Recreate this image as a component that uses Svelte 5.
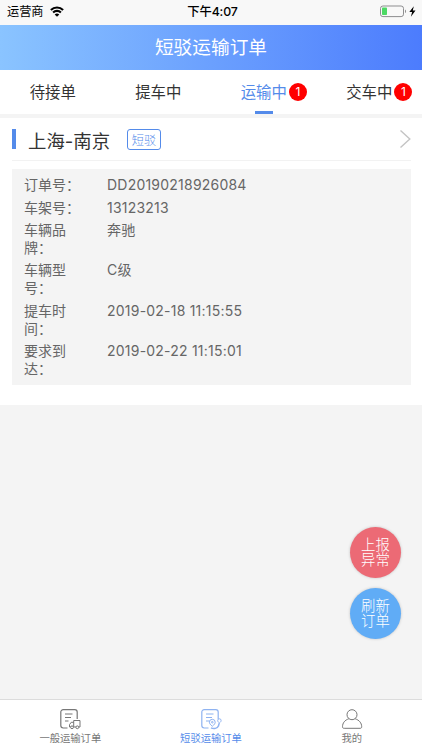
<script>
  let active = $state(2);
  let page = $state(1);

  const tabs = [
    { label: "待接单", count: 0 },
    { label: "提车中", count: 0 },
    { label: "运输中", count: 1 },
    { label: "交车中", count: 1 },
  ];

  const order = {
    route: "上海-南京",
    type: "短驳",
    fields: [
      ["订单号：", "DD20190218926084"],
      ["车架号：", "13123213"],
      ["车辆品牌：", "奔驰"],
      ["车辆型号：", "C级"],
      ["提车时间：", "2019-02-18 11:15:55"],
      ["要求到达：", "2019-02-22 11:15:01"],
    ],
  };

  const pages = ["一般运输订单", "短驳运输订单", "我的"];
</script>

<div class="app">
  <div class="status">
    <div class="carrier">
      <span>运营商</span>
      <svg width="14" height="11" viewBox="0 0 14 11">
        <path d="M.9 4a8.7 8.700 0 0 1 12.200 0M3.100 6.500a5.600 5.600 0 0 1 7.800 0" fill="none" stroke="#000" stroke-width="2.100" />
        <path d="M7 10.800 4.700 8.500a3.300 3.300 0 0 1 4.600 0z" />
      </svg>
    </div>
    <div class="time">下午4:07</div>
    <div class="battery">
      <svg width="38" height="13" viewBox="0 0 38 13">
        <rect x=".5" y="1" width="23" height="10.6" rx="2.4" fill="none" stroke="#8d8d8f" />
        <rect x="2" y="2.5" width="5" height="7.6" rx=".8" fill="#4cd964" />
        <path d="M25 4.5c1.4.4 1.4 3.2 0 3.6z" fill="#8d8d8f" />
        <path d="M33.8 1.2 29.300 7h2.800l-1.200 4.800L35.500 5.600h-2.700z" />
      </svg>
    </div>
  </div>

  <header>短驳运输订单</header>

  <nav class="tabs">
    {#each tabs as tab, i}
      <button class:active={active === i} onclick={() => (active = i)}>
        <span class="label">
          {tab.label}
          {#if tab.count}
            <span class="badge">{tab.count}</span>
          {/if}
        </span>
      </button>
    {/each}
  </nav>

  <main>
    <section class="card">
      <div class="card-head">
        <span class="mark"></span>
        <h2>{order.route}</h2>
        <span class="tag">{order.type}</span>
        <svg class="arrow" width="12" height="20" viewBox="0 0 12 20">
          <path d="M1.5 1.6 10.8 10l-9.3 8.4" fill="none" stroke="#c4c4c4" stroke-width="1.4" />
        </svg>
      </div>
      <dl>
        {#each order.fields as [name, value]}
          <div class="row">
            <dt>{name}</dt>
            <dd>{value}</dd>
          </div>
        {/each}
      </dl>
    </section>
  </main>

  <div class="floating">
    <button class="report"><span>上报</span><span>异常</span></button>
    <button class="refresh"><span>刷新</span><span>订单</span></button>
  </div>

  <footer>
    {#each pages as name, i}
      <button class:active={page === i} onclick={() => (page = i)}>
        <svg width="22" height="22" viewBox="0 0 22 22" fill="none" stroke="currentColor">
          {#if i === 2}
            <circle cx="11" cy="6.700" r="5" />
            <path d="M7.800 10.800C3.800 12.100 1.600 14.900 1.500 18.700c0 1.200.500 1.600 1.700 1.600h15.800c1.200 0 1.700-.400 1.700-1.600-.100-3.800-2.500-6.600-6.500-7.900" />
          {:else}
            <path d="M8.500 20H4.200a2.400 2.400 0 0 1-2.400-2.400V4a2.400 2.400 0 0 1 2.400-2.400h11.600A2.400 2.400 0 0 1 18.200 4v7M6 6h7.500M6 9.500h6M6 13h3.500" stroke-width="1.200" />
            {#if i === 0}
              <path d="M14.700 12.500h6.300v6.500h-6.300zM14.700 14.300h-2.500l-1.700 2.400V19h4.200" />
              <circle cx="13" cy="19.300" r="1.400" fill="#fff" />
              <circle cx="18.300" cy="19.300" r="1.400" fill="#fff" />
            {:else}
              <path d="M12.300 18.300c-2-1.600-2.900-2.900-2.900-4.100a2.900 2.900 0 0 1 5.800 0c0 1.200-.900 2.500-2.900 4.100z" />
              <circle cx="12.300" cy="14.200" r=".8" />
              <path d="M11 19.800c2.600 1.400 6.500.7 7.400-1.700.5-1.200.200-1.700 1-2.900" stroke-width="1.500" />
              <path d="M19.400 15c-1.100-.900-1.700-1.600-1.700-2.500a1.700 1.700 0 0 1 3.400 0c0 .9-.6 1.600-1.700 2.500z" />
            {/if}
          {/if}
        </svg>
        <span>{name}</span>
      </button>
    {/each}
  </footer>
</div>

<style>
  :global(body) {
    margin: 0;
  }
  .app {
    position: relative;
    display: flex;
    flex-direction: column;
    height: 750px;
    background: #f4f4f4;
    color: #333;
    font-family: Inter, "Noto Sans CJK SC", sans-serif;
  }
  button {
    padding: 0;
    border: 0;
    background: none;
    color: inherit;
    font-family: inherit;
    cursor: pointer;
  }
  .status {
    display: grid;
    grid-template-columns: 1fr auto 1fr;
    align-items: center;
    height: 25px;
    box-sizing: border-box;
    padding: 0 4px 2px 7px;
    background: #f8f8f8;
    color: #000;
    font-size: 12.2px;
    line-height: 20px;
  }
  .carrier {
    display: flex;
    align-items: center;
    gap: 6px;
  }
  .time {
    font-weight: 500;
    font-size: 12.3px;
    letter-spacing: -0.1px;
  }
  .battery {
    display: flex;
    justify-content: flex-end;
  }
  header {
    height: 45px;
    background: linear-gradient(to right, #8ac4ff, #4c7cfd);
    color: #fff;
    font-size: 18.7px;
    line-height: 46px;
    text-align: center;
  }
  .tabs {
    display: flex;
    height: 44px;
    background: #fff;
  }
  .tabs button {
    flex: 1;
    display: flex;
    justify-content: center;
    font-size: 15.4px;
    line-height: 45px;
  }
  .label {
    position: relative;
  }
  .tabs .active {
    color: #548bea;
  }
  .tabs .active .label::after {
    content: "";
    position: absolute;
    left: 50%;
    top: 41px;
    width: 18px;
    height: 3px;
    margin-left: -9px;
    background: #548bea;
  }
  .badge {
    position: absolute;
    top: 13px;
    left: 100%;
    width: 18px;
    height: 18px;
    margin-left: 2px;
    border-radius: 50%;
    background: #f00;
    color: #fff;
    font-size: 12px;
    line-height: 18px;
    text-align: center;
  }
  main {
    flex: 1;
    padding-top: 4px;
  }
  .card {
    padding: 0 11px 20px 12px;
    background: #fff;
  }
  .card-head {
    display: flex;
    align-items: center;
    height: 42px;
    border-bottom: 1px solid #f2f2f2;
  }
  .mark {
    width: 4px;
    height: 20px;
    background: #548bea;
  }
  h2 {
    margin: 0 17px 0 12px;
    font-size: 18.4px;
    font-weight: 400;
    line-height: 38px;
    padding-top: 4px;
  }
  .tag {
    box-sizing: border-box;
    width: 34px;
    height: 21px;
    margin-top: 1px;
    border: 1px solid #548bea;
    border-radius: 3px;
    color: #548bea;
    font-size: 12.2px;
    font-weight: 300;
    line-height: 21px;
    text-align: center;
  }
  .arrow {
    margin-left: auto;
  }
  dl {
    margin: 8px 0 0;
    padding: 5px 12px 5px;
    background: #f4f4f4;
    color: #666;
    font-size: 14px;
    line-height: 18px;
  }
  .row {
    display: flex;
    padding: 2.2px 0;
  }
  dt {
    width: 56px;
    margin-right: 27px;
    line-break: strict;
  }
  dd {
    margin: 0;
    letter-spacing: 0.22px;
  }
  .floating {
    position: absolute;
    right: 21px;
    top: 527px;
    display: flex;
    flex-direction: column;
    gap: 10px;
  }
  .floating button {
    display: flex;
    flex-direction: column;
    align-items: center;
    justify-content: center;
    width: 51px;
    height: 51px;
    border-radius: 50%;
    box-shadow: 0 0 3px rgba(0, 0, 0, 0.2);
    color: #fff;
    font-size: 14.4px;
    font-weight: 300;
    line-height: 14.4px;
  }
  .report {
    background: #ec6a75;
  }
  .refresh {
    background: #60acf6;
  }
  footer {
    display: flex;
    height: 50px;
    border-top: 1px solid #dcdcdc;
    background: #fff;
  }
  footer button {
    flex: 1;
    display: flex;
    flex-direction: column;
    align-items: center;
    padding-top: 8px;
    color: #777;
    font-size: 10.3px;
    line-height: 17px;
  }
  footer .active {
    color: #548bea;
  }
  footer .active svg {
    opacity: 0.65;
  }
</style>
